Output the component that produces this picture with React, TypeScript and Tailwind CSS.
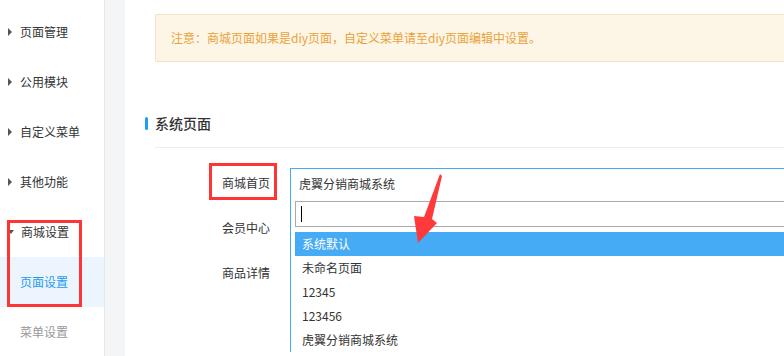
import React from "react";

type NavItem = { label: string; kind: "closed" | "open" | "sub" | "subActive" };

const navItems: NavItem[] = [
  { label: "页面管理", kind: "closed" },
  { label: "公用模块", kind: "closed" },
  { label: "自定义菜单", kind: "closed" },
  { label: "其他功能", kind: "closed" },
  { label: "商城设置", kind: "open" },
  { label: "页面设置", kind: "subActive" },
  { label: "菜单设置", kind: "sub" },
];

const options = ["系统默认", "未命名页面", "12345", "123456", "虎翼分销商城系统"];

const Sidebar = () => (
  <aside className="w-[105px] shrink-0 border-r border-[#e6e6e6] bg-white pt-[7px]">
    {navItems.map((item) => {
      if (item.kind === "sub" || item.kind === "subActive") {
        const active = item.kind === "subActive";
        return (
          <div
            key={item.label}
            className={
              active
                ? "flex h-[50px] items-center bg-[#ecf4fd] pl-[20px] text-[#1e9bf0]"
                : "flex h-[50px] items-center pl-[20px] text-[#999]"
            }
          >
            {item.label}
          </div>
        );
      }
      return (
        <div key={item.label} className="flex h-[50px] items-center pl-[8px] text-[#333]">
          {item.kind === "open" ? (
            <span className="mr-[7px] h-0 w-0 border-x-[3px] border-t-[4px] border-x-transparent border-t-[#555]" />
          ) : (
            <span className="mr-[8px] h-0 w-0 border-y-[4px] border-l-[4px] border-y-transparent border-l-[#555]" />
          )}
          {item.label}
        </div>
      );
    })}
  </aside>
);

const FormRow = ({ label, children }: { label: string; children?: React.ReactNode }) => (
  <div className="flex h-[30px] items-center">
    <div className="w-[125px] shrink-0 text-right text-[#333]">{label}</div>
    <div className="relative ml-[20px] h-full flex-1">{children}</div>
  </div>
);

const PageSelect = () => (
  <div className="relative h-full">
    <div className="flex h-[30px] items-center border-l border-t border-[#45aaf2] pl-[8px] text-[#333]">
      虎翼分销商城系统
    </div>
    <div className="absolute left-0 top-full z-10 w-[600px] border-l border-[#45aaf2] bg-white px-[4px] pt-[3px]">
      <div className="flex h-[26px] items-center border border-[#aaa] pl-[5px]">
        <span className="h-[16px] w-[1px] bg-black" />
      </div>
      <ul className="mt-[5px]">
        {options.map((opt, i) => (
          <li
            key={opt}
            className={
              i === 0
                ? "flex h-[24px] items-center bg-[#46abf5] px-[7px] text-white"
                : "flex h-[24px] items-center px-[7px] text-[#333]"
            }
          >
            {opt}
          </li>
        ))}
      </ul>
    </div>
  </div>
);

export default function App() {
  return (
    <div
      className="relative flex h-[356px] w-[784px] overflow-hidden bg-white text-[12px]"
      style={{ fontFamily: '"Noto Sans CJK SC", "Noto Sans", sans-serif' }}
    >
      <Sidebar />
      <div className="w-[20px] shrink-0 bg-[#f4f5f7]" />

      <main className="min-w-0 flex-1 overflow-hidden bg-white pl-[20px]">
        {/* notice */}
        <div className="ml-[10px] mt-[14px] flex h-[48px] w-[700px] items-center rounded-[2px] border border-[#f4e3c4] bg-[#fdf5e6] pl-[15px] text-[#e8a33a]">
          注意：商城页面如果是diy页面，自定义菜单请至diy页面编辑中设置。
        </div>

        {/* section title */}
        <div className="mt-[51px] flex h-[20px] items-center">
          <span className="h-[13px] w-[3px] rounded-[2px] bg-[#1aa1f5]" />
          <span className="ml-[7px] text-[14px] font-medium text-[#333]">系统页面</span>
        </div>
        <div className="ml-[10px] mt-[14px] h-px bg-[#ececec]" />

        {/* form */}
        <div className="mt-[20px] flex flex-col gap-[15px]">
          <FormRow label="商城首页">
            <PageSelect />
          </FormRow>
          <FormRow label="会员中心" />
          <FormRow label="商品详情" />
        </div>
      </main>

      {/* annotations */}
      <div className="pointer-events-none absolute left-[7px] top-[220px] h-[87px] w-[75px] border-[3px] border-[#ff3535]" />
      <div className="pointer-events-none absolute left-[209px] top-[163px] h-[37px] w-[68px] border-[3px] border-[#ff3535]" />
      <svg className="pointer-events-none absolute left-0 top-0 z-20" width="784" height="356">
        <polygon
          points="440,174 442,176 432,219 437,223 418,243 414,216 424,217"
          fill="#ff3a3a"
        />
      </svg>
    </div>
  );
}
